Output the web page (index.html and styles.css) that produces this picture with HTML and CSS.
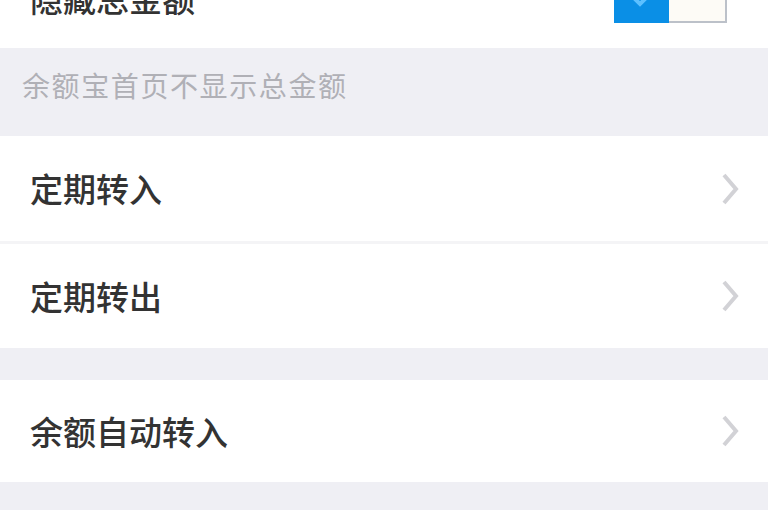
FILE: index.html
```html
<!DOCTYPE html>
<html lang="zh-CN">
<head>
<meta charset="utf-8">
<link rel="stylesheet" href="styles.css">
</head>
<body>
<div class="page">
  <div class="row row-top">
    <span class="label">隐藏总金额</span>
    <div class="toggle">
      <div class="toggle-on">
        <svg class="check" viewBox="0 0 20 12" width="20" height="12"><path d="M2 2 L8 8 L18 -2" fill="none" stroke="#5cc0ff" stroke-width="4"/></svg>
      </div>
      <div class="toggle-knob"></div>
    </div>
  </div>
  <div class="note">余额宝首页不显示总金额</div>
  <div class="group">
    <div class="row row-sep">
      <span class="label">定期转入</span>
      <svg class="chev" viewBox="0 0 20 36" width="20" height="36"><path d="M4 4 L16 18 L4 32" fill="none" stroke="#d2d2d6" stroke-width="4"/></svg>
    </div>
    <div class="row row-b">
      <span class="label">定期转出</span>
      <svg class="chev" viewBox="0 0 20 36" width="20" height="36"><path d="M4 4 L16 18 L4 32" fill="none" stroke="#d2d2d6" stroke-width="4"/></svg>
    </div>
  </div>
  <div class="group group-2">
    <div class="row row-c">
      <span class="label">余额自动转入</span>
      <svg class="chev" viewBox="0 0 20 36" width="20" height="36"><path d="M4 4 L16 18 L4 32" fill="none" stroke="#d2d2d6" stroke-width="4"/></svg>
    </div>
  </div>
</div>
</body>
</html>
```

FILE: styles.css
```css
html, body {
  margin: 0;
  padding: 0;
  background: #efeff4;
  height: 510px;
  overflow: hidden;
}
.page {
  font-family: "Noto Sans CJK SC", "Noto Sans", sans-serif;
  display: flex;
  flex-direction: column;
}
.row {
  background: #ffffff;
  display: flex;
  align-items: center;
  justify-content: space-between;
  padding: 0 28px 0 30px;
  box-sizing: border-box;
}
.label {
  font-size: 33px;
  font-weight: 500;
  color: #333333;
  line-height: 1;
}
.row-top {
  height: 100px;
  margin-top: -52px;
  padding-right: 41px;
}
.toggle {
  display: flex;
  height: 54px;
  margin-top: -4px;
}
.toggle-on {
  width: 55px;
  background: #0a8fe6;
  position: relative;
}
.check {
  position: absolute;
  left: 18px;
  top: 27px;
}
.toggle-knob {
  width: 56px;
  background: #fdfbf6;
  border: 2px solid #bcc1c9;
  border-left: none;
}
.note {
  height: 88px;
  box-sizing: border-box;
  padding: 19px 0 0 22px;
  font-size: 28px;
  letter-spacing: 1.6px;
  color: #b0b0b6;
  line-height: 1.3;
}
.row-sep {
  height: 108px;
  border-bottom: 3px solid #f4f4f6;
}
.row-b {
  height: 104px;
}
.group-2 {
  margin-top: 32px;
}
.row-c {
  height: 102px;
}
.chev {
  display: block;
}
```
